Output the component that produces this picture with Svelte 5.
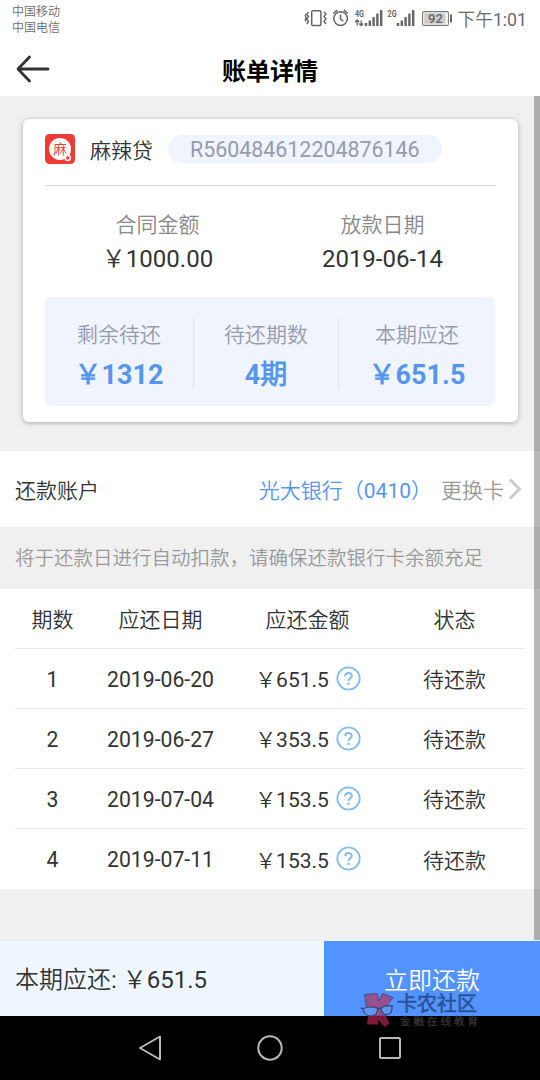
<script>
  // Полноширинный знак юаня
  const yuan = '\uFFE5';

  // Карточка договора
  const loan = {
    name: '麻辣贷',
    number: 'R560484612204876146',
    info: [
      { label: '合同金额', value: yuan + '1000.00' },
      { label: '放款日期', value: '2019-06-14' }
    ],
    summary: [
      { label: '剩余待还', value: yuan + '1312' },
      { label: '待还期数', value: '4期' },
      { label: '本期应还', value: yuan + '651.5' }
    ]
  };

  const bank = '光大银行\uFF080410\uFF09';
  const notice = '将于还款日进行自动扣款\uFF0C请确保还款银行卡余额充足';

  // График платежей
  const periods = [
    { id: 1, date: '2019-06-20', amount: '651.5' },
    { id: 2, date: '2019-06-27', amount: '353.5' },
    { id: 3, date: '2019-07-04', amount: '153.5' },
    { id: 4, date: '2019-07-11', amount: '153.5' }
  ];

  const bars = [3, 5.5, 9, 12.5, 16];
</script>

<div class="screen" lang="zh-CN">
  <div class="status-bar">
    <div class="carriers">
      <span>中国移动</span>
      <span>中国电信</span>
    </div>
    <svg class="status-icons" width="150" height="24" viewBox="304 6 150 24">
      <!-- Вибрация -->
      <g fill="none" stroke="#666" stroke-width="1.5">
        <rect x="311.7" y="10.7" width="9.2" height="14.8" rx="1" />
        <path d="M308.6 12l-2 2 2 2.5-2 2.5 2 2.5-2 2.5M306 14.5l-.8 1 .8 2-.8 2.5.8 1.5M324 12l2 2-2 2.5 2 2.5-2 2.5 2 2.5" stroke-width="1.4" />
        <!-- Будильник -->
        <circle cx="340.6" cy="18.6" r="6.8" />
        <path d="M340.5 14.5v4.3l2.8 2.4M333.3 13.5l4-3.3M347.9 13.5l-4-3.3" />
      </g>
      <text class="net" x="355" y="17" textLength="9" lengthAdjust="spacingAndGlyphs">4G</text>
      <path d="M357.2 25.5v-5M355.2 22l2-2 2 2M361.2 20.5v5M359.2 23.5l2 2 2-2" fill="none" stroke="#666" stroke-width="1.3" />
      <text class="net" x="387.6" y="17" textLength="9" lengthAdjust="spacingAndGlyphs">2G</text>
      {#each bars as h, i}
        <rect x={364.8 + i * 3.8} y={26 - h} width="2.4" height={h} fill="#666" />
        <rect x={396.8 + i * 3.8} y={26 - h} width="2.4" height={h} fill="#666" />
      {/each}
      <!-- Батарея -->
      <rect x="422.6" y="11.6" width="25.8" height="13.8" rx="1.5" fill="#fff" stroke="#777" stroke-width="1.1" />
      <rect x="424.2" y="13.2" width="21.5" height="10.6" fill="#ccc" />
      <rect x="450" y="14.5" width="2" height="8" fill="#666" />
      <text class="battery" x="435.5" y="23.2" text-anchor="middle">92</text>
    </svg>
    <span class="clock">下午1:01</span>
  </div>

  <header class="nav">
    <svg class="back" width="34" height="28" viewBox="0 0 34 28" fill="none" stroke="#333" stroke-width="2.8" stroke-linecap="round" stroke-linejoin="round">
      <path d="M13.5 2L2 14l11.5 12M2 14h30" />
    </svg>
    <h1>账单详情</h1>
  </header>

  <main>
    <section class="card">
      <div class="card-head">
        <svg class="logo" width="30" height="30" viewBox="0 0 30 30">
          <rect width="30" height="30" rx="4.5" fill="#f03a35" />
          <circle cx="15" cy="15" r="11" fill="#fff" />
          <text x="15" y="19.5" text-anchor="middle">麻</text>
          <circle cx="22.8" cy="24" r="2.5" fill="#f03a35" stroke="#fff" stroke-width="1.4" />
          <path d="M20.8 20.3l1 1.4M24.8 20.3l-1 1.4" stroke="#fff" stroke-width="1.1" />
        </svg>
        <span class="loan-name">{loan.name}</span>
        <span class="loan-number">{loan.number}</span>
      </div>

      <div class="info">
        {#each loan.info as item}
          <div class="info-item">
            <span class="label">{item.label}</span>
            <span class="value">{item.value}</span>
          </div>
        {/each}
      </div>

      <div class="summary">
        {#each loan.summary as item}
          <div class="summary-item">
            <span class="label">{item.label}</span>
            <span class="value">{item.value}</span>
          </div>
        {/each}
      </div>
    </section>

    <section class="account">
      <span>还款账户</span>
      <span class="bank">{bank}</span>
      <span class="change">更换卡</span>
      <svg width="14" height="22" viewBox="0 0 14 22" fill="none" stroke="#ccc" stroke-width="3">
        <path d="M2 1.5L11.5 11 2 20.5" />
      </svg>
    </section>

    <p class="notice">{notice}</p>

    <section class="table">
      <div class="row">
        <span>期数</span>
        <span>应还日期</span>
        <span>应还金额</span>
        <span>状态</span>
      </div>
      {#each periods as period (period.id)}
        <div class="row">
          <span class="num">{period.id}</span>
          <span class="num">{period.date}</span>
          <span class="amount">
            {yuan}{period.amount}
            <svg width="25" height="25" viewBox="0 0 25 25" fill="none" stroke="#84bcf0">
              <circle cx="12.5" cy="12.5" r="11.2" stroke-width="1.8" />
              <path d="M9.2 10.2c0-2 1.4-3.3 3.3-3.3s3.3 1.2 3.3 3c0 2.3-3.2 2.6-3.2 5.2" stroke-width="2" />
              <path d="M12.5 16.7v2.2" stroke-width="2.2" />
            </svg>
          </span>
          <span>待还款</span>
        </div>
      {/each}
    </section>
  </main>

  <footer class="pay-bar">
    <div class="total">本期应还: {yuan}651.5</div>
    <button type="button">立即还款</button>
  </footer>

  <div class="system-nav">
    <svg width="24" height="26" viewBox="0 0 24 26" fill="none" stroke="#b8b8b8" stroke-width="2" stroke-linejoin="round">
      <path d="M22 1.5v23L2 13z" />
    </svg>
    <svg width="26" height="26" viewBox="0 0 26 26" fill="none" stroke="#b8b8b8" stroke-width="2">
      <circle cx="13" cy="13" r="11.7" />
    </svg>
    <svg width="24" height="24" viewBox="0 0 24 24" fill="none" stroke="#b8b8b8" stroke-width="2">
      <rect x="2" y="2" width="20" height="20" rx="1" />
    </svg>
  </div>

  <div class="scrollbar"></div>

  <!-- Водяной знак поверх кнопки и системной панели -->
  <svg class="watermark" width="122" height="38" viewBox="358 990 122 38">
    <path d="M364.5 994.5L377.5 993.5L378.5 1001L382.5 993.5L393 997.5L385.500 1008L386 1016H368z" fill="#98508f" stroke="#3a4480" stroke-width="0.8" />
    <path d="M368 1016h18l3.500 7.500-5 3.500-6.500-7.500v5h-11z" fill="#7d1a3a" />
    <g fill="#6296ec" stroke="#31456b" stroke-width="1.2">
      <path d="M363 1008.5c4-1.600 10-1.800 14.500-.6.5 5-2 8.100-6.500 8.100-4.700 0-7.800-3-8-7.500z" />
      <path d="M381 1007.5c3.500-1.800 7.500-2.300 11-1.700.6 5-1.200 8.700-5 8.900-3.700.2-6-2.700-6-7.200z" />
      <path d="M377.5 1009l3.500-1M360.5 1008l2.500.5" fill="none" />
    </g>
    <text class="wm-name" x="397" y="1011" textLength="80">卡农社区</text>
    <text class="wm-sub" x="400" y="1025" textLength="78">金融在线教育</text>
  </svg>
</div>

<style>
  :global(body) {
    margin: 0;
    background: #fff;
  }

  .screen {
    position: relative;
    display: flex;
    flex-direction: column;
    width: 540px;
    height: 1080px;
    overflow: hidden;
    font-family: Roboto, 'Noto Sans CJK SC DemiLight', 'Noto Sans CJK SC', sans-serif;
    font-size: 21px;
    color: #333;
    background: #fff;
  }

  .status-bar {
    display: flex;
    align-items: flex-start;
    box-sizing: border-box;
    height: 42px;
    padding: 3px 13px 0 12px;
    color: #6a6a6a;
  }

  .carriers {
    display: flex;
    flex: 1;
    flex-direction: column;
    padding-top: 0.5px;
    font-size: 12px;
    line-height: 16.5px;
  }

  .status-icons {
    margin: 3px 4px 0 0;
  }

  .status-icons text {
    fill: #666;
  }

  .net {
    font-size: 9.5px;
    font-weight: 700;
  }

  .battery {
    font-size: 13px;
    font-weight: 500;
  }

  .clock {
    font-size: 17.7px;
    line-height: 34px;
  }

  .nav {
    display: grid;
    grid-template-columns: 60px 1fr 60px;
    align-items: center;
    height: 54px;
  }

  .back {
    margin-left: 16px;
  }

  h1 {
    margin: 0;
    padding-top: 1px;
    font-family: 'Noto Sans CJK SC', sans-serif;
    font-size: 24px;
    font-weight: 700;
    line-height: 36px;
    text-align: center;
    color: #000;
  }

  main {
    flex: 1;
    box-sizing: border-box;
    padding-top: 22.5px;
    background: #f0f0f0;
  }

  .card {
    box-sizing: border-box;
    height: 303px;
    margin: 0 22.5px 29.5px;
    padding: 0 22.5px;
    border-radius: 6px;
    background: #fff;
    box-shadow: 0 1px 5px rgba(0, 0, 0, 0.3);
  }

  .card-head {
    display: flex;
    align-items: center;
    box-sizing: border-box;
    height: 67.5px;
    padding-bottom: 6px;
    border-bottom: 1.5px solid #d4d4d4;
  }

  .logo text {
    font-size: 13.5px;
    fill: #f03a35;
  }

  .loan-name {
    margin: 0 15px;
  }

  .loan-number {
    padding: 1px 22px 0;
    border-radius: 14px;
    font-size: 21.4px;
    line-height: 27px;
    color: #969bad;
    background: #f0f4fc;
  }

  .info {
    display: flex;
    height: 110.5px;
    box-sizing: border-box;
    padding-top: 22px;
  }

  .info-item {
    display: flex;
    flex: 1;
    flex-direction: column;
    align-items: center;
  }

  .label {
    font-weight: 350;
    line-height: 34px;
    color: #888;
  }

  .info .value {
    font-size: 24px;
    line-height: 35px;
  }

  .summary {
    display: grid;
    grid-template-columns: 148px 145px 157px;
    align-items: start;
    box-sizing: border-box;
    height: 109.5px;
    padding: 22.5px 0 15px;
    border-radius: 6px;
    background: #f0f4fc;
  }

  .summary-item {
    display: flex;
    flex-direction: column;
    align-items: center;
    height: 72px;
    border-left: 1px solid #e2e5ec;
  }

  .summary-item:first-child {
    border-left: none;
  }

  .summary .label {
    line-height: 32px;
    color: #969bad;
  }

  .summary .value {
    font-size: 27px;
    font-weight: 700;
    line-height: 48px;
    color: #5596f0;
  }

  .account {
    display: flex;
    align-items: center;
    height: 75.5px;
    padding: 0 18px 0 15px;
    background: #fff;
  }

  .bank {
    margin-left: auto;
    color: #5596f0;
  }

  .change {
    margin: 0 4px 0 9px;
    font-weight: 350;
    color: #999;
  }

  .notice {
    margin: 0;
    padding: 2px 0 0 15px;
    font-size: 19.5px;
    font-weight: 350;
    line-height: 60px;
    white-space: nowrap;
    color: #999;
  }

  .table {
    padding: 0 15px;
    background: #fff;
  }

  .row {
    display: grid;
    grid-template-columns: 75px 141px 153px 141px;
    align-items: center;
    box-sizing: border-box;
    height: 60px;
    border-bottom: 1.5px solid #e8e8e8;
    text-align: center;
  }

  .row:last-child {
    border-bottom: none;
  }

  .num {
    padding-top: 2px;
    font-size: 21.2px;
  }

  .amount {
    display: flex;
    align-items: center;
    justify-content: center;
    gap: 7px;
    padding-left: 1px;
  }

  .pay-bar {
    display: flex;
    height: 75px;
    font-size: 24px;
    line-height: 75px;
  }

  .total {
    flex: 3;
    padding: 2px 0 0 15px;
    background: #eef7ff;
  }

  button {
    flex: 0 0 216px;
    box-sizing: border-box;
    padding: 3px 0 0;
    border: none;
    font: inherit;
    font-weight: 350;
    color: #fff;
    background: #5293ff;
  }

  .system-nav {
    display: flex;
    align-items: center;
    justify-content: center;
    gap: 95px;
    height: 64px;
    background: #000;
  }

  .scrollbar {
    position: absolute;
    top: 96px;
    right: 0;
    width: 6px;
    height: 844px;
    background: rgba(0, 0, 0, 0.28);
  }

  .watermark {
    position: absolute;
    top: 990px;
    left: 358px;
    pointer-events: none;
  }

  .wm-name {
    font-size: 20px;
    font-weight: 700;
    fill: #2b5496;
  }

  .wm-sub {
    font-size: 10.5px;
    font-weight: 700;
    fill: #303030;
  }
</style>
